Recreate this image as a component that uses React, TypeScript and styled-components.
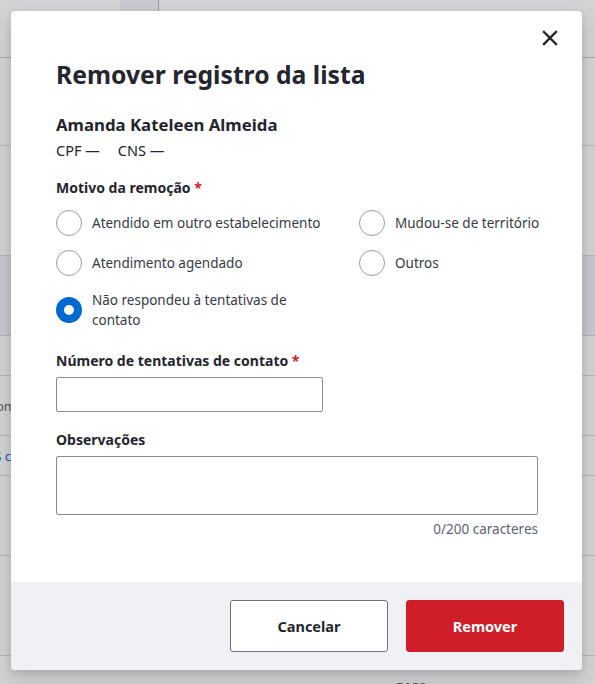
import styled, { createGlobalStyle } from 'styled-components';

const GlobalStyle = createGlobalStyle`
  html, body {
    margin: 0;
    padding: 0;
    background: #ffffff;
    font-family: 'Noto Sans', 'Liberation Sans', sans-serif;
    color: #24252e;
  }
  * {
    box-sizing: border-box;
  }
`;

const Page = styled.div`
  width: 595px;
  height: 684px;
  overflow: hidden;
  position: relative;
  background: #fff;
`;

const TopBar = styled.div`
  display: flex;
  height: 58px;
  border-bottom: 1px solid #c9cad2;
`;

const Tab = styled.div<{ $width: number; $active?: boolean }>`
  width: ${(p) => p.$width}px;
  background: ${(p) => (p.$active ? '#f4f4f8' : '#fff')};
  border-right: 1px solid ${(p) => (p.$active ? '#b9bac4' : 'transparent')};
`;

const Row = styled.div<{ $height: number; $shade?: boolean }>`
  height: ${(p) => p.$height}px;
  border-bottom: 1px solid #d9dae0;
  background: ${(p) => (p.$shade ? '#f0f0f5' : '#fff')};
  display: flex;
  align-items: center;
  font-size: 13px;
  color: #5e6270;
`;

const RowText = styled.span<{ $blue?: boolean }>`
  margin-left: -14px;
  color: ${(p) => (p.$blue ? '#0069d0' : '#5e6270')};
`;

const FootText = styled.div`
  position: absolute;
  left: 396px;
  top: 678px;
  font-size: 13px;
  font-weight: 600;
  color: #5e6270;
`;

const Overlay = styled.div`
  position: absolute;
  inset: 0;
  background: rgba(34, 36, 52, 0.2);
  display: flex;
  justify-content: flex-start;
  align-items: flex-start;
  padding: 11px 0 0 11px;
`;

const Modal = styled.div`
  position: relative;
  width: 571px;
  background: #fff;
  border-radius: 4px;
  overflow: hidden;
  box-shadow: 0 8px 20px rgba(0, 0, 0, 0.16), 0 2px 6px rgba(0, 0, 0, 0.08);
`;

const CloseButton = styled.button`
  position: absolute;
  top: 13px;
  right: 18px;
  width: 28px;
  height: 28px;
  border: none;
  background: transparent;
  padding: 0;
  display: flex;
  align-items: center;
  justify-content: center;
  cursor: pointer;
  color: #24252e;
`;

const Body = styled.div`
  padding: 48px 44px 44px 45px;
  display: flex;
  flex-direction: column;
`;

const Title = styled.h1`
  margin: 0;
  font-size: 24.7px;
  line-height: 32px;
  font-weight: 700;
  color: #24252e;
`;

const Name = styled.h2`
  margin: 22px 0 0;
  font-size: 16.8px;
  line-height: 24px;
  font-weight: 700;
`;

const Docs = styled.div`
  display: flex;
  gap: 18px;
  margin-top: 2px;
  font-size: 14.5px;
  line-height: 22px;
`;

const Label = styled.div<{ $top: number }>`
  margin-top: ${(p) => p.$top}px;
  font-size: 14px;
  line-height: 20px;
  font-weight: 700;
  color: #24252e;

  span {
    color: #d01e29;
  }
`;

const RadioGrid = styled.div`
  display: grid;
  grid-template-columns: 303px 1fr;
  row-gap: 14px;
  margin-top: 12px;
`;

const RadioItem = styled.label`
  display: flex;
  align-items: center;
  gap: 10px;
  font-size: 13.5px;
  line-height: 20px;
  color: #373a45;
  min-height: 26px;
`;

const RadioCircle = styled.span<{ $checked?: boolean }>`
  flex: none;
  width: 26px;
  height: 26px;
  border-radius: 50%;
  background: #fff;
  border: ${(p) => (p.$checked ? '8px solid #0069d0' : '1px solid #9a9aa6')};
`;

const RadioText = styled.span<{ $wrap?: boolean }>`
  white-space: ${(p) => (p.$wrap ? 'normal' : 'nowrap')};
  max-width: ${(p) => (p.$wrap ? '234px' : 'none')};
`;

const Input = styled.div<{ $width: string; $height: number }>`
  margin-top: 6px;
  width: ${(p) => p.$width};
  height: ${(p) => p.$height}px;
  border: 1px solid #8a8b98;
  border-radius: 2px;
  background: #fff;
`;

const Counter = styled.div`
  align-self: flex-end;
  margin-top: 5px;
  font-size: 13.5px;
  line-height: 18px;
  color: #5e6270;
`;

const Footer = styled.div`
  background: #f0f0f5;
  padding: 18px;
  display: flex;
  justify-content: flex-end;
  gap: 18px;
`;

const Button = styled.button<{ $danger?: boolean }>`
  width: 158px;
  height: 52px;
  border-radius: 3px;
  font-family: inherit;
  font-size: 14.5px;
  font-weight: 700;
  cursor: pointer;
  border: 1px solid ${(p) => (p.$danger ? '#d01e29' : '#6f7080')};
  background: ${(p) => (p.$danger ? '#d01e29' : '#fff')};
  color: ${(p) => (p.$danger ? '#fff' : '#24252e')};
`;

const reasons = [
  { label: 'Atendido em outro estabelecimento', checked: false },
  { label: 'Mudou-se de território', checked: false },
  { label: 'Atendimento agendado', checked: false },
  { label: 'Outros', checked: false },
  { label: 'Não respondeu à tentativas de contato', checked: true, wrap: true },
];

const App = () => {
  return (
    <Page>
      <GlobalStyle />
      <TopBar>
        <Tab $width={120} />
        <Tab $width={39} $active />
      </TopBar>
      <Row $height={88} />
      <Row $height={110} />
      <Row $height={80} $shade />
      <Row $height={40} />
      <Row $height={60}>
        <RowText>Nome</RowText>
      </Row>
      <Row $height={40}>
        <RowText $blue>CS c</RowText>
      </Row>
      <Row $height={80} />
      <Row $height={100} />
      <FootText>EAP?</FootText>
      <Overlay>
        <Modal>
          <CloseButton aria-label='Fechar'>
            <svg width='16' height='16' viewBox='0 0 16 16'>
              <path
                d='M2 2 L14 14 M14 2 L2 14'
                stroke='currentColor'
                strokeWidth='2.4'
                strokeLinecap='square'
              />
            </svg>
          </CloseButton>
          <Body>
            <Title>Remover registro da lista</Title>
            <Name>Amanda Kateleen Almeida</Name>
            <Docs>
              <span>CPF —</span>
              <span>CNS —</span>
            </Docs>
            <Label $top={17}>
              Motivo da remoção <span>*</span>
            </Label>
            <RadioGrid>
              {reasons.map((r) => (
                <RadioItem key={r.label}>
                  <RadioCircle $checked={r.checked} />
                  <RadioText $wrap={r.wrap}>{r.label}</RadioText>
                </RadioItem>
              ))}
            </RadioGrid>
            <Label $top={21}>
              Número de tentativas de contato <span>*</span>
            </Label>
            <Input $width='267px' $height={35} />
            <Label $top={18}>Observações</Label>
            <Input $width='100%' $height={59} />
            <Counter>0/200 caracteres</Counter>
          </Body>
          <Footer>
            <Button>Cancelar</Button>
            <Button $danger>Remover</Button>
          </Footer>
        </Modal>
      </Overlay>
    </Page>
  );
};

export default App;
